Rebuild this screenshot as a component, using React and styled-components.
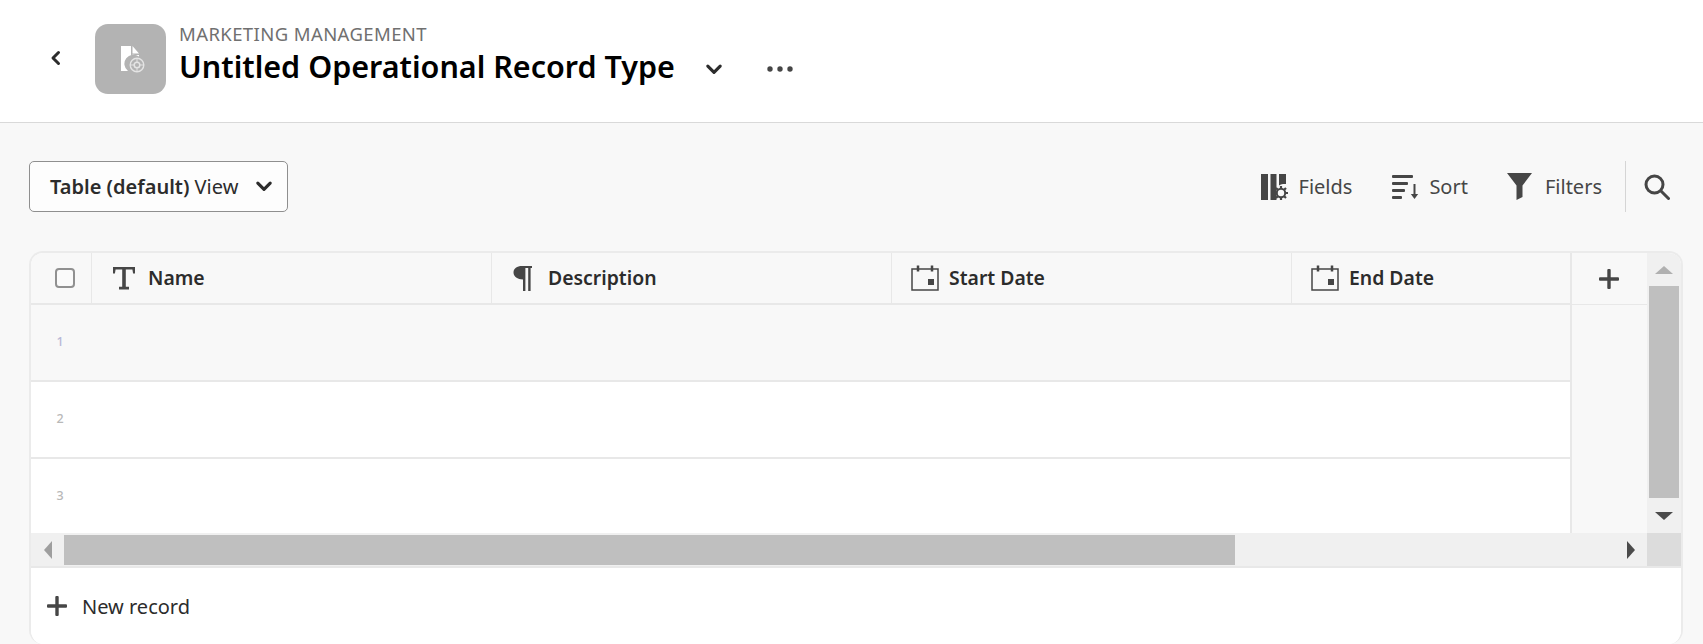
import React from "react";
import styled, { createGlobalStyle } from "styled-components";

const Global = createGlobalStyle`
  html, body { margin: 0; padding: 0; background: #fff; }
  body { font-family: "Noto Sans", "Open Sans", sans-serif; color: #2c2c2c; }
  #root { height: 644px; overflow: hidden; }
`;

const Page = styled.div`display: flex; flex-direction: column; height: 644px; overflow: hidden;`;

const TopBar = styled.header`
  flex: none; height: 122px; box-sizing: content-box; background: #fff;
  border-bottom: 1px solid #d9d9d9; display: flex; align-items: flex-start;
  padding-left: 48px;
`;
const BackButton = styled.span`width: 16px; height: 20px; margin-top: 50px; color: #2c2c2c; display: flex;`;
const RecordTile = styled.div`
  width: 71px; height: 70px; margin: 24px 13px 0 31px; border-radius: 13px; background: #b3b3b3;
  display: flex; align-items: center; justify-content: center;
  svg { margin-left: 5px; }
`;
const TitleBlock = styled.div`display: flex; flex-direction: column; padding-top: 22px;`;
const Eyebrow = styled.div`font-size: 18.5px; line-height: 23px; color: #707070; font-weight: 400; letter-spacing: 0.4px;`;
const TitleRow = styled.div`display: flex; align-items: center; height: 43px;`;
const Title = styled.h1`margin: 0; font-size: 30.5px; line-height: 43px; font-weight: 600; color: #000;`;
const TitleAction = styled.span`display: flex; color: #2c2c2c; margin: 4px 0 0 ${p => p.$gap}px;`;

const Main = styled.main`
  flex: 1; min-height: 0; background: #f8f8f8; padding: 38px 20px 0 29px;
  display: flex; flex-direction: column;
`;
const Toolbar = styled.div`display: flex; align-items: center; justify-content: space-between; height: 51px; margin-bottom: 39px; padding-right: 13px;`;
const ViewSelect = styled.div`
  box-sizing: border-box; width: 259px; height: 51px; border: 1px solid #8f8f8f; border-radius: 5px; background: #fdfdfd;
  display: flex; align-items: center; justify-content: space-between; padding: 0 14px 0 20px;
  font-size: 20px; color: #2c2c2c;
  b { font-weight: 600; }
  svg { margin-top: -1px; }
`;
const Actions = styled.div`display: flex; align-items: center; height: 100%;`;
const Action = styled.div`display: flex; align-items: center; gap: ${p => p.$inner}px; font-size: 20px; color: #464646; margin-left: ${p => p.$gap}px;`;
const Divider = styled.div`width: 1px; height: 51px; background: #d5d5d5; margin: 0 18px 0 23px;`;

const Frame = styled.section`
  box-sizing: border-box; width: 1654px; flex: 1; border: 2px solid #ebebeb; border-bottom: none;
  border-radius: 14px; background: #fff; overflow: hidden; display: flex; flex-direction: column;
`;
const GridArea = styled.div`display: flex; height: 280px; flex: none;`;
const DataArea = styled.div`flex: 1; min-width: 0; display: flex; overflow: hidden;`;
const Rows = styled.div`width: 1539px; flex: none;`;
const HeaderRow = styled.div`
  display: grid; grid-template-columns: 61px 400px 400px 400px 278px; height: 52px; box-sizing: border-box;
  border-bottom: 2px solid #e8e8e8; background: #f8f8f8;
`;
const HeaderCell = styled.div`
  display: flex; align-items: center; gap: ${p => p.$gap}px; padding: 0 0 1px ${p => p.$pad}px; font-size: 19.4px; font-weight: 600; color: #2c2c2c;
  border-right: ${p => (p.$last ? "none" : "1px solid #e8e8e8")};
`;
const Check = styled.span`
  box-sizing: border-box; width: 20px; height: 20px; border: 2px solid #909090; border-radius: 4px; background: #fafafa; margin-left: 24px;
`;
const Row = styled.div`
  height: 77px; box-sizing: border-box; border-bottom: 2px solid #e8e8e8;
  background: ${p => (p.$hover ? "#f8f8f8" : "#fff")}; display: flex; align-items: center;
`;
const RowNumber = styled.span`
  width: 58px; text-align: center; font-size: 12.5px; margin-top: -2px; font-weight: 500;
  color: ${p => (p.$hover ? "#b7b7d6" : "#b8b8b8")};
`;
const AddColumn = styled.div`width: 77px; flex: none; background: #f8f8f8; border-left: 2px solid #e8e8e8; box-sizing: border-box;`;
const AddHead = styled.div`height: 52px; box-sizing: border-box; border-bottom: 1px solid #e8e8e8; padding-right: 2px; display: flex; align-items: center; justify-content: center; color: #464646;`;

const VBar = styled.div`width: 34px; flex: none; background: #f0f0f0; display: flex; flex-direction: column; align-items: center; padding: 0 2px; box-sizing: border-box;`;
const ArrowBox = styled.div`height: ${p => p.$h}px; width: 100%; flex: none; display: flex; align-items: center; justify-content: center;`;
const VThumb = styled.div`width: 30px; height: 212px; background: #bfbfbf; flex: none;`;
const Tri = styled.span`
  width: 0; height: 0; display: block;
  ${p => p.$dir === "up" && `border-left:9px solid transparent;border-right:9px solid transparent;border-bottom:8px solid ${p.$c};`}
  ${p => p.$dir === "down" && `border-left:9px solid transparent;border-right:9px solid transparent;border-top:8px solid ${p.$c};`}
  ${p => p.$dir === "left" && `border-top:9px solid transparent;border-bottom:9px solid transparent;border-right:8px solid ${p.$c};`}
  ${p => p.$dir === "right" && `border-top:9px solid transparent;border-bottom:9px solid transparent;border-left:8px solid ${p.$c};`}
`;
const HBar = styled.div`height: 35px; flex: none; box-sizing: border-box; background: #f0f0f0; border-bottom: 2px solid #e8e8e8; display: flex; align-items: flex-start;`;
const HTrack = styled.div`flex: 1; display: flex; align-items: center; height: 33px; padding-top: 1px; box-sizing: border-box;`;
const HArrow = styled.div`width: ${p => p.$w}px; flex: none; height: 33px; display: flex; align-items: center; justify-content: center;`;
const HThumb = styled.div`width: 1171px; height: 30px; background: #bfbfbf; flex: none;`;
const HSpacer = styled.div`flex: 1;`;
const Corner = styled.div`width: 34px; height: 33px; background: #dcdcdc; flex: none;`;
const Footer = styled.div`flex: 1; display: flex; align-items: center; gap: 15px; padding: 0 0 0 16px; font-size: 20px; color: #2c2c2c; background: #fff;`;

const Chevron = ({ dir = "down", size = 16, sw = 3 }) => (
  <svg width={size} height={size} viewBox="0 0 16 16" fill="none" stroke="currentColor" strokeWidth={sw} strokeLinecap="round" strokeLinejoin="round">
    {dir === "down" ? <path d="M2.5 5.5 8 11l5.5-5.5" /> : <path d="M10.5 2.5 5 8l5.5 5.5" />}
  </svg>
);
const Plus = ({ size = 20 }) => (
  <svg width={size} height={size} viewBox="0 0 20 20" fill="#464646"><rect x="8.3" y="0" width="3.4" height="20" rx="1" /><rect x="0" y="8.3" width="20" height="3.4" rx="1" /></svg>
);
const Calendar = () => (
  <svg width="28" height="27" viewBox="0 0 28 27" fill="none" stroke="#464646" strokeWidth="1.5">
    <path d="M1 5h26v21H1z" />
    <path d="M7 1.5v6M21 1.5v6" strokeWidth="2.5" />
    <rect x="17" y="15" width="6" height="6" fill="#464646" stroke="none" />
  </svg>
);
const TextIcon = () => (
  <svg width="24" height="24" viewBox="0 0 24 24" fill="#464646">
    <path d="M1 1h22v6.5h-1.9L20.4 3.5H13.8V20.8H17V23.5H7V20.8H10.2V3.5H3.6L2.9 7.5H1z" />
  </svg>
);
const Pilcrow = () => (
  <svg width="20" height="26" viewBox="0 0 20 26" fill="#464646">
    <path d="M9 1h10v2h-1.4v23h-2.4V3h-2.8v23H10V14.5C4.5 14.5 0.5 11.5 0.5 7.5S4 1 9 1z" />
  </svg>
);
const FieldsIcon = () => (
  <svg width="28" height="28" viewBox="0 0 28 28" fill="#464646">
    <rect x="0" y="1" width="7" height="26" />
    <rect x="9.5" y="1" width="6" height="26" />
    <path d="M18 1h7v10h-3a9 9 0 0 0-4 1.5z" />
    <g fill="none" stroke="#464646">
      <circle cx="20" cy="20" r="4.2" strokeWidth="2" />
      <path d="M20 13v2.5M20 24.5V27M13 20h2.5M24.5 20H27M15 15l1.8 1.8M23.2 23.2 25 25M25 15l-1.8 1.8M16.8 23.2 15 25" strokeWidth="2.2" />
    </g>
  </svg>
);
const SortIcon = () => (
  <svg width="27" height="26" viewBox="0 0 27 26" fill="#464646">
    <rect x="0" y="1" width="21" height="3" rx="1" />
    <rect x="0" y="8" width="16" height="3" rx="1" />
    <rect x="0" y="15" width="13" height="3" rx="1" />
    <rect x="0" y="22" width="10" height="3" rx="1" />
    <rect x="21.5" y="10" width="2" height="12" />
    <path d="M18.8 20h7.4l-3.7 5z" />
  </svg>
);
const FilterIcon = () => (
  <svg width="25" height="27" viewBox="0 0 25 27" fill="#464646">
    <path d="M0 0h25L15.5 12.5V24l-6 3V12.5z" />
  </svg>
);
const SearchIcon = () => (
  <svg width="26" height="26" viewBox="0 0 26 26" fill="none" stroke="#464646" strokeWidth="3" strokeLinecap="round">
    <circle cx="10.5" cy="10.5" r="8.5" />
    <path d="m17 17 7.5 7.5" />
  </svg>
);
const RecordGlyph = () => (
  <svg width="24" height="27" viewBox="0 0 24 27">
    <path d="M0 0h10v9h8v1.5a8.5 8.5 0 0 0-11 14.5H0z" fill="#fff" />
    <path d="M11.5 0 18 7.5h-6.5z" fill="#fff" />
    <g fill="none" stroke="#e4e4e4">
      <circle cx="16" cy="19" r="6.8" strokeWidth="1.4" />
      <circle cx="16" cy="19" r="2.8" strokeWidth="1.5" />
      <path d="M16 12v4M16 22v4M9 19h4M19 19h4" strokeWidth="1" />
    </g>
  </svg>
);
const Dots = () => (
  <svg width="26" height="6" viewBox="0 0 26 6" fill="#464646"><circle cx="3" cy="3" r="2.7" /><circle cx="13" cy="3" r="2.7" /><circle cx="23" cy="3" r="2.7" /></svg>
);

const columns = [
  { label: "Name", icon: <TextIcon />, pad: 20, gap: 12 },
  { label: "Description", icon: <Pilcrow />, pad: 21, gap: 15 },
  { label: "Start Date", icon: <Calendar />, pad: 19, gap: 10 },
  { label: "End Date", icon: <Calendar />, pad: 19, gap: 10, last: true },
];

export default function App() {
  return (
    <Page>
      <Global />
      <TopBar>
        <BackButton><Chevron dir="left" size={16} sw={3} /></BackButton>
        <RecordTile><RecordGlyph /></RecordTile>
        <TitleBlock>
          <Eyebrow>MARKETING MANAGEMENT</Eyebrow>
          <TitleRow>
            <Title>Untitled Operational Record Type</Title>
            <TitleAction $gap={30}><Chevron size={18} sw={2.8} /></TitleAction>
            <TitleAction $gap={44}><Dots /></TitleAction>
          </TitleRow>
        </TitleBlock>
      </TopBar>
      <Main>
        <Toolbar>
          <ViewSelect>
            <span><b>Table (default)</b> View</span>
            <Chevron size={18} sw={2.8} />
          </ViewSelect>
          <Actions>
            <Action $gap={0} $inner={10}><FieldsIcon />Fields</Action>
            <Action $gap={40} $inner={10}><SortIcon />Sort</Action>
            <Action $gap={39} $inner={13}><FilterIcon />Filters</Action>
            <Divider />
            <SearchIcon />
          </Actions>
        </Toolbar>
        <Frame>
          <GridArea>
            <DataArea>
              <Rows>
                <HeaderRow>
                  <HeaderCell><Check /></HeaderCell>
                  {columns.map(c => (
                    <HeaderCell key={c.label} $pad={c.pad} $gap={c.gap} $last={c.last}>{c.icon}{c.label}</HeaderCell>
                  ))}
                </HeaderRow>
                <Row $hover><RowNumber $hover>1</RowNumber></Row>
                <Row><RowNumber>2</RowNumber></Row>
                <Row><RowNumber>3</RowNumber></Row>
              </Rows>
              <AddColumn><AddHead><Plus /></AddHead></AddColumn>
            </DataArea>
            <VBar>
              <ArrowBox $h={33}><Tri $dir="up" $c="#b0b0b0" /></ArrowBox>
              <VThumb />
              <ArrowBox $h={35}><Tri $dir="down" $c="#4b4b4b" /></ArrowBox>
            </VBar>
          </GridArea>
          <HBar>
            <HArrow $w={33}><Tri $dir="left" $c="#9e9e9e" /></HArrow>
            <HTrack><HThumb /><HSpacer /></HTrack>
            <HArrow $w={33}><Tri $dir="right" $c="#4b4b4b" /></HArrow>
            <Corner />
          </HBar>
          <Footer><Plus />New record</Footer>
        </Frame>
      </Main>
    </Page>
  );
}
